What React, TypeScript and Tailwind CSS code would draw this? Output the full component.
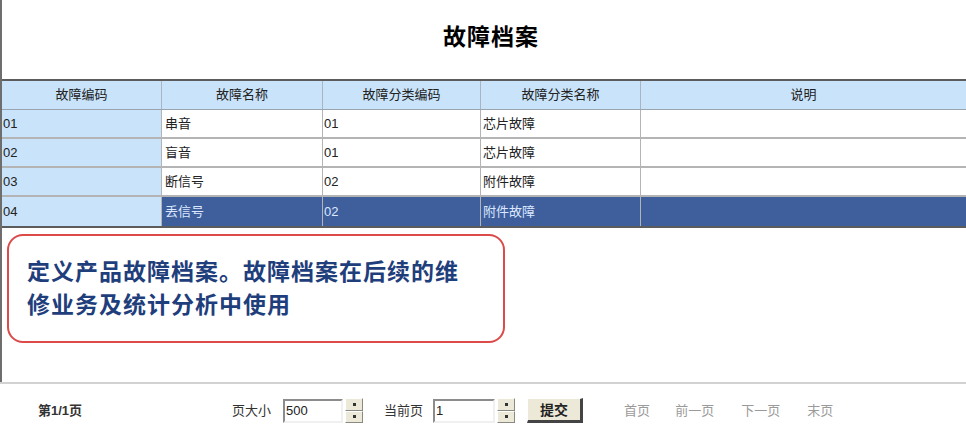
const font = "font-['Liberation_Sans','Noto_Sans_CJK_SC',sans-serif]";

const rows = [
  { code: "01", name: "串音", cat: "01", catName: "芯片故障" },
  { code: "02", name: "盲音", cat: "01", catName: "芯片故障" },
  { code: "03", name: "断信号", cat: "02", catName: "附件故障" },
  { code: "04", name: "丢信号", cat: "02", catName: "附件故障", selected: true },
];

const cols = "grid grid-cols-[159px_161px_158px_160px_1fr]";

function Spinner() {
  return (
    <div className="flex flex-col w-[18px] h-[25px] ml-[2px]">
      <div className="flex-1 flex items-center justify-center bg-[#ece9d8] border border-t-white border-l-white border-b-[#8a8a80] border-r-[#8a8a80]">
        <div className="w-[3px] h-[3px] bg-[#333]" />
      </div>
      <div className="flex-1 flex items-center justify-center bg-[#ece9d8] border border-t-white border-l-white border-b-[#8a8a80] border-r-[#8a8a80]">
        <div className="w-[3px] h-[3px] bg-[#333]" />
      </div>
    </div>
  );
}

function NumInput({ value, width }: { value: string; width: string }) {
  return (
    <div className={`${width} h-[24px] bg-white border-2 border-t-[#8c8c8c] border-l-[#8c8c8c] border-b-[#f0f0f0] border-r-[#f0f0f0] text-[13px] leading-[20px] px-[1px] text-[#222]`}>
      {value}
    </div>
  );
}

export default function App() {
  return (
    <div className={`w-[966px] h-[437px] bg-white overflow-hidden ${font}`}>
      <div className="h-[382px] border-l-2 border-[#6e6e6e] flex flex-col">
        <div className="h-[79px] flex items-center justify-center pb-[4px] pl-[14px]">
          <h1 className="text-[23px] font-bold text-black tracking-[1px]">故障档案</h1>
        </div>

        <div className="border-t-2 border-b-2 border-[#5c5c5c] text-[13px] text-[#222]">
          <div className={`${cols} h-[29px] bg-[#c9e4fa] border-b border-[#9aa4ae]`}>
            {["故障编码", "故障名称", "故障分类编码", "故障分类名称", "说明"].map((h, i) => (
              <div
                key={h}
                className={`flex items-center justify-center ${i > 0 ? "border-l border-[#a9b6c2]" : ""}`}
              >
                {h}
              </div>
            ))}
          </div>
          {rows.map((r, idx) => {
            const cell = r.selected
              ? "bg-[#3f5e9c] text-[#dbe8ff]"
              : "bg-white text-[#222]";
            return (
              <div
                key={r.code}
                className={`${cols} h-[29px] ${idx < rows.length - 1 ? "border-b-2 border-[#b4b4b4]" : ""}`}
              >
                <div className="bg-[#c9e4fa] flex items-center pl-[1px]">{r.code}</div>
                <div className={`${cell} flex items-center pl-[3px] border-l border-[#b4b4b4]`}>{r.name}</div>
                <div className={`${cell} flex items-center pl-[1px] border-l border-[#b4b4b4]`}>{r.cat}</div>
                <div className={`${cell} flex items-center pl-[2px] border-l border-[#b4b4b4]`}>{r.catName}</div>
                <div className={`${cell} border-l border-[#b4b4b4]`} />
              </div>
            );
          })}
        </div>

        <div className="mt-[6px] ml-[5px] w-[498px] h-[109px] border-2 border-[#dc4a4a] rounded-[16px] pl-[18px] pt-[20px]">
          <p className="text-[23px] font-bold leading-[33px] text-[#1f3e7c] tracking-[1px]">
            定义产品故障档案。故障档案在后续的维
            <br />
            修业务及统计分析中使用
          </p>
        </div>
      </div>

      <div className="border-t-2 border-[#d2d2d2] h-[55px] flex items-center text-[13px]">
        <span className="ml-[38px] font-bold text-[#333]">第1/1页</span>
        <span className="ml-[150px] text-[#333]">页大小</span>
        <div className="ml-[12px] flex items-center">
          <NumInput value="500" width="w-[60px]" />
          <Spinner />
        </div>
        <span className="ml-[21px] text-[#333]">当前页</span>
        <div className="ml-[10px] flex items-center">
          <NumInput value="1" width="w-[62px]" />
          <Spinner />
        </div>
        <button className="ml-[12px] w-[56px] h-[25px] bg-[#ece9d8] border border-t-white border-l-white border-b-[3px] border-r-[3px] border-b-[#444] border-r-[#444] text-[14px] font-bold text-[#222] leading-none">
          提交
        </button>
        <span className="ml-[41px] text-[#9a9a9a]">首页</span>
        <span className="ml-[25px] text-[#9a9a9a]">前一页</span>
        <span className="ml-[27px] text-[#9a9a9a]">下一页</span>
        <span className="ml-[27px] text-[#9a9a9a]">末页</span>
      </div>
    </div>
  );
}
